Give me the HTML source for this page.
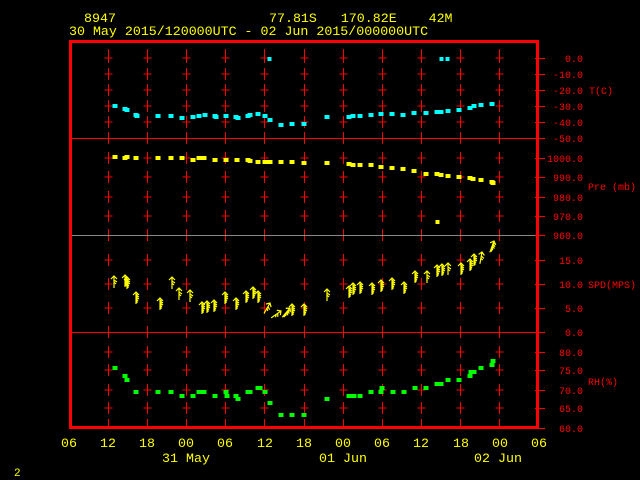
<!DOCTYPE html>
<html><head><meta charset="utf-8"><style>
html,body{margin:0;padding:0;background:#000;width:640px;height:480px;overflow:hidden}
svg{display:block}
text{font-family:"Liberation Mono","DejaVu Sans Mono",monospace;white-space:pre}
</style></head><body>
<svg width="640" height="480" viewBox="0 0 640 480" xmlns="http://www.w3.org/2000/svg">
<defs>
<g id="col" stroke="#f00" stroke-width="1" fill="none">
<path d="M0,49v14M-4,58h8M0,68v12M-4,74h8M0,84v12M-4,90h8M0,100v12M-4,106h8M0,116v12M-4,122h8M0,132v12"/>
<path d="M0,152v12M-4,158h8M0,171v12M-4,177h8M0,191v12M-4,197h8M0,210v12M-4,216h8M0,229v12"/>
<path d="M0,254v12M-4,260h8M0,278v12M-4,284h8M0,302v12M-4,308h8M0,326v12"/>
<path d="M0,346v12M-4,352h8M0,364v12M-4,370h8M0,384v12M-4,390h8M0,402v12M-4,408h8M0,419v8"/>
</g>
<path id="ar" d="M0,0v12M-3,3L0,0L3,3M0,4l3,2M0,6l2,2" stroke="#ff0" stroke-width="1.2" fill="none"/>
<path id="ar2" d="M0,0v12M-3,3L0,0L3,3M0,3l3,2M0,5l3,2M0,7l2,2M1,2v9" stroke="#ff0" stroke-width="1.2" fill="none"/>
</defs>

<g fill="#ff0" font-size="13.3">
<text x="84" y="22">8947</text>
<text x="269" y="22" xml:space="preserve">77.81S   170.82E    42M</text>
<text x="69" y="35">30 May 2015/120000UTC - 02 Jun 2015/000000UTC</text>
</g>

<use href="#col" x="108.5"/><use href="#col" x="147.5"/><use href="#col" x="186.5"/><use href="#col" x="225.5"/><use href="#col" x="264.5"/><use href="#col" x="304.5"/><use href="#col" x="343.5"/><use href="#col" x="382.5"/><use href="#col" x="421.5"/><use href="#col" x="460.5"/><use href="#col" x="499.5"/>

<path d="M70,138.5H545M70,332.5H545" stroke="#f00" stroke-width="1"/>
<path d="M70,235.5H537" stroke="#888" stroke-width="1"/>

<rect x="70.5" y="41.5" width="467" height="386" fill="none" stroke="#f00" stroke-width="3"/>

<path stroke="#f00" stroke-width="1" d="M535,58.5h10M535,74.5h10M535,90.5h10M535,106.5h10M535,122.5h10M535,158.5h10M535,177.5h10M535,197.5h10M535,216.5h10M535,235.5h10M535,260.5h10M535,284.5h10M535,308.5h10M535,352.5h10M535,370.5h10M535,390.5h10M535,408.5h10M535,428.5h10"/>

<g fill="#f00" font-size="10" text-anchor="end">
<text x="583" y="62">0.0</text><text x="583" y="78">-10.0</text><text x="583" y="94">-20.0</text><text x="583" y="110">-30.0</text><text x="583" y="126">-40.0</text><text x="583" y="142">-50.0</text>
<text x="583" y="162">1000.0</text><text x="583" y="181">990.0</text><text x="583" y="201">980.0</text><text x="583" y="220">970.0</text><text x="583" y="239">960.0</text>
<text x="583" y="264">15.0</text><text x="583" y="288">10.0</text><text x="583" y="312">5.0</text><text x="583" y="336">0.0</text>
<text x="583" y="356">80.0</text><text x="583" y="374">75.0</text><text x="583" y="394">70.0</text><text x="583" y="412">65.0</text><text x="583" y="432">60.0</text>
</g>
<g fill="#f00" font-size="10">
<text x="589" y="94">T(C)</text><text x="588" y="190" xml:space="preserve">Pre (mb)</text><text x="588" y="288">SPD(MPS)</text><text x="588" y="385">RH(%)</text>
</g>

<g fill="#ff0" font-size="13.3" text-anchor="middle">
<text x="69" y="447">06</text><text x="108" y="447">12</text><text x="147" y="447">18</text><text x="186" y="447">00</text><text x="225" y="447">06</text><text x="265" y="447">12</text><text x="304" y="447">18</text><text x="343" y="447">00</text><text x="382" y="447">06</text><text x="421" y="447">12</text><text x="461" y="447">18</text><text x="500" y="447">00</text><text x="539" y="447">06</text>
<text x="186" y="462">31 May</text><text x="343" y="462">01 Jun</text><text x="498" y="462">02 Jun</text>
</g>
<text x="14" y="476" fill="#ff0" font-size="11">2</text>

<g fill="#0ff" transform="translate(-2.5,-2)">
<rect x="115" y="106" width="5" height="4"/><rect x="125" y="109" width="5" height="4"/><rect x="127" y="110" width="5" height="4"/><rect x="136" y="115" width="5" height="4"/><rect x="137" y="116" width="5" height="4"/><rect x="158" y="116" width="5" height="4"/><rect x="171" y="116" width="5" height="4"/><rect x="182" y="118" width="5" height="4"/><rect x="193" y="117" width="5" height="4"/><rect x="199" y="116" width="5" height="4"/><rect x="205" y="115" width="5" height="4"/><rect x="215" y="116" width="5" height="4"/><rect x="216" y="117" width="5" height="4"/><rect x="226" y="116" width="5" height="4"/><rect x="236" y="117" width="5" height="4"/><rect x="238" y="118" width="5" height="4"/><rect x="248" y="116" width="5" height="4"/><rect x="250" y="115" width="5" height="4"/><rect x="258" y="114" width="5" height="4"/><rect x="265" y="116" width="5" height="4"/><rect x="270" y="120" width="5" height="4"/><rect x="281" y="125" width="5" height="4"/><rect x="292" y="124" width="5" height="4"/><rect x="304" y="124" width="5" height="4"/><rect x="327" y="117" width="5" height="4"/><rect x="349" y="117" width="5" height="4"/><rect x="353" y="116" width="5" height="4"/><rect x="360" y="116" width="5" height="4"/><rect x="371" y="115" width="5" height="4"/><rect x="381" y="114" width="5" height="4"/><rect x="392" y="114" width="5" height="4"/><rect x="403" y="115" width="5" height="4"/><rect x="414" y="113" width="5" height="4"/><rect x="426" y="113" width="5" height="4"/><rect x="437" y="112" width="5" height="4"/><rect x="441" y="112" width="5" height="4"/><rect x="448" y="111" width="5" height="4"/><rect x="459" y="110" width="5" height="4"/><rect x="470" y="108" width="5" height="4"/><rect x="474" y="106" width="5" height="4"/><rect x="481" y="105" width="5" height="4"/><rect x="492" y="104" width="5" height="4"/><rect x="270" y="59" width="4" height="4"/><rect x="442" y="59" width="4" height="4"/><rect x="448" y="59" width="4" height="4"/>
</g>

<g fill="#ff0" transform="translate(-2.5,-2)">
<rect x="115" y="157" width="5" height="4"/><rect x="125" y="158" width="5" height="4"/><rect x="127" y="157" width="5" height="4"/><rect x="136" y="158" width="5" height="4"/><rect x="158" y="158" width="5" height="4"/><rect x="171" y="158" width="5" height="4"/><rect x="182" y="158" width="5" height="4"/><rect x="193" y="160" width="5" height="4"/><rect x="199" y="158" width="5" height="4"/><rect x="204" y="158" width="5" height="4"/><rect x="215" y="160" width="5" height="4"/><rect x="226" y="160" width="5" height="4"/><rect x="237" y="160" width="5" height="4"/><rect x="248" y="160" width="5" height="4"/><rect x="250" y="161" width="5" height="4"/><rect x="258" y="162" width="5" height="4"/><rect x="265" y="162" width="5" height="4"/><rect x="270" y="162" width="5" height="4"/><rect x="281" y="162" width="5" height="4"/><rect x="292" y="162" width="5" height="4"/><rect x="304" y="163" width="5" height="4"/><rect x="327" y="163" width="5" height="4"/><rect x="349" y="164" width="5" height="4"/><rect x="353" y="165" width="5" height="4"/><rect x="360" y="165" width="5" height="4"/><rect x="371" y="165" width="5" height="4"/><rect x="381" y="167" width="5" height="4"/><rect x="392" y="168" width="5" height="4"/><rect x="403" y="169" width="5" height="4"/><rect x="414" y="171" width="5" height="4"/><rect x="426" y="174" width="5" height="4"/><rect x="437" y="174" width="5" height="4"/><rect x="441" y="175" width="5" height="4"/><rect x="448" y="176" width="5" height="4"/><rect x="459" y="177" width="5" height="4"/><rect x="470" y="178" width="5" height="4"/><rect x="473" y="179" width="5" height="4"/><rect x="481" y="180" width="5" height="4"/><rect x="492" y="182" width="5" height="4"/><rect x="493" y="183" width="5" height="4"/><rect x="438" y="222" width="4" height="4"/>
</g>

<g fill="#0f0" transform="translate(-2.5,-2)">
<rect x="115" y="368" width="5" height="4"/><rect x="125" y="376" width="5" height="4"/><rect x="127" y="380" width="5" height="4"/><rect x="136" y="392" width="5" height="4"/><rect x="158" y="392" width="5" height="4"/><rect x="171" y="392" width="5" height="4"/><rect x="182" y="396" width="5" height="4"/><rect x="193" y="396" width="5" height="4"/><rect x="199" y="392" width="5" height="4"/><rect x="204" y="392" width="5" height="4"/><rect x="215" y="396" width="5" height="4"/><rect x="226" y="392" width="5" height="4"/><rect x="227" y="396" width="5" height="4"/><rect x="236" y="396" width="5" height="4"/><rect x="238" y="399" width="5" height="4"/><rect x="248" y="392" width="5" height="4"/><rect x="250" y="392" width="5" height="4"/><rect x="258" y="388" width="5" height="4"/><rect x="260" y="388" width="5" height="4"/><rect x="265" y="392" width="5" height="4"/><rect x="270" y="403" width="5" height="4"/><rect x="281" y="415" width="5" height="4"/><rect x="292" y="415" width="5" height="4"/><rect x="304" y="415" width="5" height="4"/><rect x="327" y="399" width="5" height="4"/><rect x="349" y="396" width="5" height="4"/><rect x="354" y="396" width="5" height="4"/><rect x="360" y="396" width="5" height="4"/><rect x="371" y="392" width="5" height="4"/><rect x="381" y="392" width="5" height="4"/><rect x="382" y="388" width="5" height="4"/><rect x="393" y="392" width="5" height="4"/><rect x="404" y="392" width="5" height="4"/><rect x="415" y="388" width="5" height="4"/><rect x="426" y="388" width="5" height="4"/><rect x="437" y="384" width="5" height="4"/><rect x="441" y="384" width="5" height="4"/><rect x="448" y="380" width="5" height="4"/><rect x="459" y="380" width="5" height="4"/><rect x="470" y="376" width="5" height="4"/><rect x="471" y="372" width="5" height="4"/><rect x="474" y="372" width="5" height="4"/><rect x="481" y="368" width="5" height="4"/><rect x="492" y="365" width="5" height="4"/><rect x="493" y="361" width="5" height="4"/>
</g>

<use href="#ar" x="114" y="276"/>
<use href="#ar2" x="125" y="275"/><use href="#ar2" x="127" y="277"/>
<use href="#ar2" x="136" y="292"/>
<use href="#ar2" x="160" y="298"/>
<use href="#ar" x="172" y="277"/>
<use href="#ar" x="179" y="288"/>
<use href="#ar" x="190" y="290"/>
<use href="#ar2" x="202" y="302"/><use href="#ar2" x="207" y="301"/>
<use href="#ar2" x="214" y="300"/>
<use href="#ar2" x="225" y="292"/>
<use href="#ar2" x="236" y="298"/>
<use href="#ar2" x="246" y="291"/><use href="#ar2" x="253" y="287"/><use href="#ar2" x="258" y="291"/>
<use href="#ar" transform="translate(270,303) rotate(30)"/>
<use href="#ar" transform="translate(281,311) rotate(55)"/>
<use href="#ar2" transform="translate(290,308) rotate(40)"/>
<use href="#ar2" x="292" y="304"/>
<use href="#ar2" x="304" y="304"/>
<use href="#ar" x="327" y="289"/>
<use href="#ar2" x="349" y="286"/><use href="#ar2" x="353" y="283"/><use href="#ar2" x="360" y="282"/>
<use href="#ar2" x="372" y="283"/><use href="#ar2" x="381" y="280"/><use href="#ar2" x="392" y="278"/>
<use href="#ar2" x="404" y="282"/><use href="#ar2" x="415" y="271"/><use href="#ar" x="427" y="271"/>
<use href="#ar2" x="437" y="265"/><use href="#ar2" x="442" y="264"/><use href="#ar" x="448" y="263"/>
<use href="#ar2" x="461" y="263"/><use href="#ar2" x="470" y="259"/><use href="#ar2" x="474" y="254"/>
<use href="#ar" transform="translate(482,252) rotate(10)"/>
<use href="#ar2" transform="translate(494,241) rotate(20)"/>
</svg>
</body></html>
